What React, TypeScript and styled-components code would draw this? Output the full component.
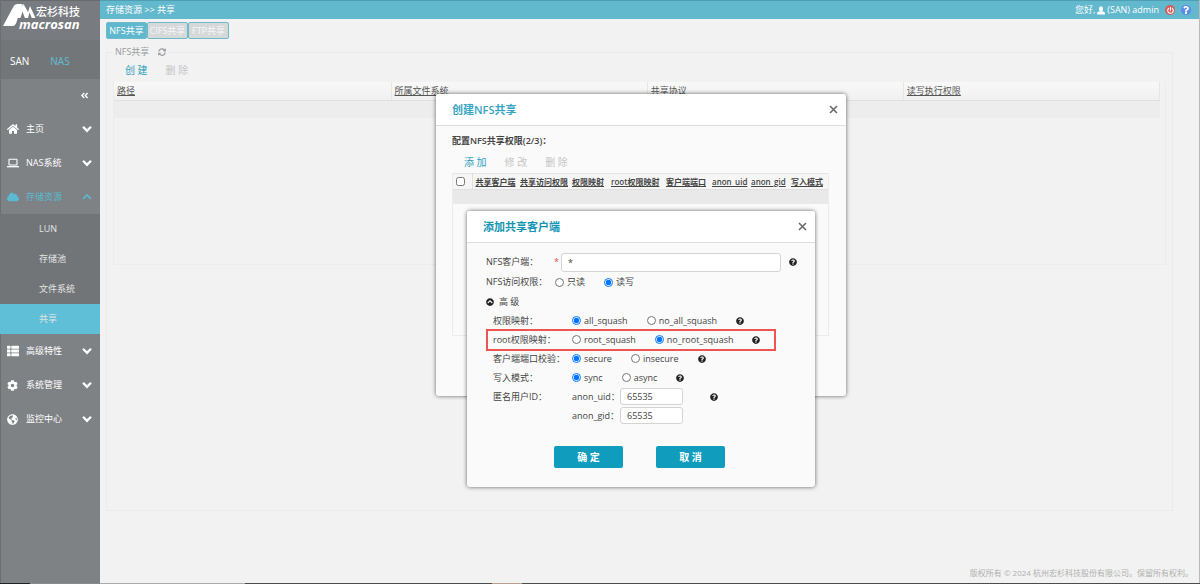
import React from 'react';
import styled, { createGlobalStyle, css } from 'styled-components';
import {
  FaAngleDoubleLeft, FaChevronCircleUp, FaCloud, FaCog,
  FaGlobeAmericas, FaHome, FaPowerOff, FaQuestion, FaQuestionCircle, FaSyncAlt, FaThList,
} from 'react-icons/fa';

const GlobalStyle = createGlobalStyle`
  * { box-sizing: border-box; }
  body {
    margin: 0;
    background: #f2f2f2;
    font: 9px/12px "Open Sans", "Noto Sans CJK SC", sans-serif;
    color: #444;
  }
  button, input { font: inherit; }
  button { cursor: pointer; }
  a { color: inherit; text-decoration: none; }
  ul { list-style: none; margin: 0; padding: 0; }
  svg { display: block; flex: none; }
`;

const Shell = styled.div`
  position: relative;
  display: flex;
  min-height: 100vh;
`;

/* sidebar */
const Sidebar = styled.aside`
  flex: none;
  width: 100px;
  background: #7e8285;
  border-left: 1px solid #6c6f72;
  color: #f4f4f4;
`;
const Logo = styled.div`
  display: flex;
  height: 40px;
  padding: 3px 0 0 2px;
  background: #787b7f;
  border-top: 1px solid #686b6e;
  color: #fff;
`;
const LogoText = styled.div`
  display: flex;
  flex-direction: column;
  margin-left: -17px;
  padding-top: 2px;
`;
const LogoName = styled.span`
  padding-left: 17px;
  font-size: 11px;
  line-height: 12px;
  font-weight: 500;
`;
const LogoLatin = styled.span`
  font: italic 700 13px/12px "Open Sans", sans-serif;
`;
const Systems = styled.nav`
  display: flex;
  align-items: center;
  gap: 21px;
  height: 39px;
  padding: 2px 0 0 9px;
  background: #737679;
  font-size: 10px;
`;
const SystemLink = styled.a<{ $active?: boolean }>`
  color: ${p => (p.$active ? '#62bdd6' : '#fff')};
`;
const Collapse = styled.button`
  display: flex;
  align-items: center;
  justify-content: flex-end;
  width: 100%;
  height: 33px;
  padding: 0 11px 0 0;
  border: 0;
  background: none;
  color: #fff;
`;
const MenuItem = styled.a<{ $active?: boolean }>`
  display: flex;
  align-items: center;
  height: 34px;
  padding: 0 8px 0 6px;
  color: ${p => (p.$active ? '#5bb9d1' : '#fff')};
`;
const MenuIcon = styled.span`
  width: 19px;
`;
const MenuText = styled.span`
  flex: 1;
`;
const SubItem = styled.a<{ $active?: boolean }>`
  display: flex;
  align-items: center;
  height: 30px;
  margin-left: -1px;
  padding-left: 39px;
  color: #e2e4e5;
  background: ${p => (p.$active ? '#5fbfd6' : '#727578')};
`;

/* main area */
const Main = styled.main`
  flex: 1;
  min-width: 0;
  display: flex;
  flex-direction: column;
  border-right: 1px solid #b9b9b9;
`;
const TopBar = styled.header`
  display: flex;
  align-items: center;
  justify-content: space-between;
  height: 19px;
  padding: 0 8px 0 6px;
  background: #62b8cd;
  border-top: 1px solid #4e9fb3;
  color: #fff;
`;
const UserBox = styled.div`
  display: flex;
  align-items: center;
  gap: 2px;
`;
const RoundButton = styled.button<{ $color: string }>`
  display: flex;
  align-items: center;
  justify-content: center;
  width: 10px;
  height: 10px;
  margin-left: 4px;
  padding: 0;
  border: 0;
  border-radius: 5px;
  background: ${p => p.$color};
  color: #fff;
`;
const Tabs = styled.div`
  display: flex;
  padding: 3px 6px 0;
`;
const Tab = styled.button<{ $active?: boolean }>`
  min-width: 41px;
  height: 17px;
  padding: 0 1px;
  border: 1px solid #6fb9ca;
  border-radius: 2px;
  background: ${p => (p.$active ? '#5fb8cd' : '#d6d9da')};
  color: ${p => (p.$active ? '#fff' : '#f6f6f6')};
`;
const Panel = styled.fieldset`
  flex: 1;
  min-width: 0;
  margin: 7px 26px 0 6px;
  padding: 6px 6px 0;
  border: 1px solid #ebebeb;
`;
const PanelTitle = styled.legend`
  display: flex;
  align-items: center;
  gap: 9px;
  padding: 0 2px;
  color: #9a9a9f;
`;
const Actions = styled.div`
  display: flex;
  gap: 18px;
  padding-left: 12px;
`;
const Action = styled.button`
  padding: 0;
  border: 0;
  background: none;
  color: #2d9fbe;
  font-size: 10px;
  line-height: 12px;
  &:disabled { color: #c6c6c6; }
`;
const GridBox = styled.div<{ $height: number; $top: number }>`
  height: ${p => p.$height}px;
  margin-top: ${p => p.$top}px;
  border: 1px solid #ececec;
  border-top: 0;
`;
const ShareTable = styled.table`
  width: calc(100% - 5px);
  table-layout: fixed;
  border-collapse: collapse;
  th {
    height: 18px;
    padding: 0 3px;
    border-right: 1px solid #e6e6e6;
    border-bottom: 1px solid #e0e0e0;
    background: linear-gradient(#f8f8f8, #f0f0f0);
    color: #555;
    font-weight: 400;
    text-align: left;
    text-decoration: underline;
  }
  td { height: 18px; padding: 0; background: #ededed; }
`;
const Footer = styled.footer`
  height: 73px;
  padding: 56px 6px 0 0;
  color: #b0b0b0;
  font-size: 8px;
  text-align: right;
`;

/* dialogs */
const Overlay = styled.div<{ $top: number }>`
  position: absolute;
  inset: 0;
  display: flex;
  justify-content: center;
  align-items: flex-start;
  padding: ${p => p.$top}px 0 0 82px;
`;
const Dialog = styled.section<{ $width: number; $height: number }>`
  width: ${p => p.$width}px;
  min-height: ${p => p.$height}px;
  border-radius: 3px;
  background: #fafafa;
  box-shadow: 0 0 4px rgba(0, 0, 0, .6);
`;
const DialogHead = styled.header`
  display: flex;
  align-items: center;
  justify-content: space-between;
  height: 32px;
  padding: 0 8px 0 16px;
  border-bottom: 1px solid #ddd;
  border-radius: 3px 3px 0 0;
  background: #fff;
`;
const DialogTitle = styled.h2<{ $soft?: boolean }>`
  margin: 0;
  color: ${p => (p.$soft ? '#36a5c2' : '#1394b2')};
  font-size: 11px;
  font-weight: ${p => (p.$soft ? 600 : 700)};
`;
const Close = styled.button`
  padding: 0;
  border: 0;
  background: none;
  color: #6a6a6a;
`;
const DialogBody = styled.div`
  padding: 9px 17px 0 16px;
`;
const Step = styled.p`
  margin: 0 0 9px;
  font-weight: 600;
`;
const ClientTable = styled.table`
  width: 100%;
  table-layout: fixed;
  border-collapse: collapse;
  font-size: 8px;
  th {
    height: 16px;
    padding: 0 0 0 3px;
    border-top: 1px solid #e4e4e4;
    border-bottom: 1px solid #e0e0e0;
    background: #f6f6f6;
    font-weight: 600;
    line-height: 10px;
    text-align: left;
    text-decoration: underline;
    white-space: nowrap;
  }
  th:first-child { border-right: 1px solid #e0e0e0; }
  td { height: 14px; padding: 0; background: #e9e9e9; }
`;
const Check = styled.input`
  display: block;
  width: 9px;
  height: 9px;
  margin: 0;
`;

/* form */
const Form = styled.form`
  padding: 9px 14px 0 19px;
`;
const Row = styled.div<{ $nested?: boolean; $marked?: boolean }>`
  position: relative;
  display: flex;
  align-items: center;
  height: ${p => (p.$nested ? 19 : 20)}px;
  padding-left: ${p => (p.$nested ? 7 : 0)}px;
  ${p => p.$marked && css`
    &::after {
      content: "";
      position: absolute;
      inset: -1px 25px -2px 0;
      border: 2px solid #ee5451;
      pointer-events: none;
    }
  `}
`;
const Label = styled.span<{ $width: number }>`
  flex: none;
  display: flex;
  justify-content: space-between;
  width: ${p => p.$width}px;
  padding-right: 2px;
  white-space: nowrap;
`;
const Star = styled.span`
  color: #e2503f;
`;
const Options = styled.div`
  display: flex;
  align-items: center;
  gap: 19px;
`;
const Option = styled.label`
  display: flex;
  align-items: center;
  gap: 3px;
`;
const Radio = styled.input`
  width: 9px;
  height: 9px;
  margin: 0;
`;
const TextBox = styled.input<{ $small?: boolean }>`
  width: ${p => (p.$small ? 63 : 220)}px;
  height: ${p => (p.$small ? 17 : 19)}px;
  padding: 0 6px;
  border: 1px solid #d4d4d4;
  border-radius: 3px;
  background: #fff;
  color: #444;
`;
const IdLabel = styled.label`
  width: 48px;
`;
const Help = styled.span<{ $gap?: number }>`
  margin-left: ${p => p.$gap ?? 0}px;
  color: #222;
`;
const Advanced = styled.button`
  display: flex;
  align-items: center;
  gap: 5px;
  height: 19px;
  padding: 0;
  border: 0;
  background: none;
  color: #444;
  svg { color: #222; }
`;
const Buttons = styled.div`
  display: flex;
  justify-content: center;
  gap: 33px;
  padding: 21px 8px 0 0;
`;
const Primary = styled.button`
  width: 69px;
  height: 22px;
  border: 0;
  border-radius: 2px;
  background: #0f9cbd;
  color: #fff;
  font-size: 10px;
  font-weight: 600;
`;
const Strip = styled.div`
  position: absolute;
  inset: auto 0 0;
  height: 1px;
  background: linear-gradient(90deg, #222 30px, #8a8a8a 30px 100px, #aaa 100px 245px, #4c4c4c 245px 492px, #b89f90 492px 522px, #4c4c4c 522px);
`;

const CloseIcon = () => (
  <svg width="9" height="9" viewBox="0 0 9 9" stroke="currentColor" strokeWidth="1.6">
    <path d="M1 1l7 7M8 1l-7 7" />
  </svg>
);

const Chevron = ({ up }: { up?: boolean }) => (
  <svg width="10" height="8" viewBox="0 0 10 8" fill="none" stroke="currentColor" strokeWidth={up ? 1.7 : 2.3}>
    <path d={up ? 'M1 6l4-4 4 4' : 'M1 1.8l4 4 4-4'} />
  </svg>
);

const LaptopIcon = () => (
  <svg width="12" height="10" viewBox="0 0 12 10" fill="none" stroke="currentColor">
    <rect x="2" y="1.2" width="8" height="5.8" rx=".6" strokeWidth="1.1" />
    <path d="M0 8.7h12" strokeWidth="1.3" />
  </svg>
);

const UserIcon = () => (
  <svg width="8" height="9" viewBox="0 0 8 9" fill="currentColor">
    <ellipse cx="4" cy="2.7" rx="2.1" ry="2.5" />
    <path d="M0 8.5V7.4q0-1.7 2.4-2.2h3.2Q8 5.700 8 7.400v1.100z" />
  </svg>
);

const LogoMark = () => (
  <svg width="33" height="23" viewBox="0 0 33 23" fill="currentColor">
    <path d="M0 22L10.500 2.500Q11.800 0 14 0h5.500L13 19.500Q12 22 9.500 22z" />
    <path d="M18 3l2.500-3 4.500 8L27 2l5.500 12h-3.700L26.500 8.500 25 14h-3.200L19.500 7.500 17.500 14h-3z" />
  </svg>
);

const HelpIcon = ({ gap }: { gap?: number }) => (
  <Help $gap={gap}><FaQuestionCircle size={8} /></Help>
);

const Choice = ({ name, options, value }: { name: string; options: string[]; value: string }) => (
  <>
    {options.map(o => (
      <Option key={o}>
        <Radio type="radio" name={name} defaultChecked={o === value} />
        {o}
      </Option>
    ))}
  </>
);

const settings = [
  { label: '权限映射：', name: 'squash', options: ['all_squash', 'no_all_squash'], value: 'all_squash' },
  { label: 'root权限映射：', name: 'root', options: ['root_squash', 'no_root_squash'], value: 'no_root_squash', marked: true },
  { label: '客户端端口校验：', name: 'port', options: ['secure', 'insecure'], value: 'secure' },
  { label: '写入模式：', name: 'mode', options: ['sync', 'async'], value: 'sync' },
];

const clientColumns: [string, number][] = [
  ['共享客户端', 45], ['共享访问权限', 52], ['权限映射', 39], ['root权限映射', 55],
  ['客户端端口', 46], ['anon_uid', 39], ['anon_gid', 40], ['写入模式', 40],
];

export default function App() {
  return (
    <Shell>
      <GlobalStyle />
      <Sidebar>
        <Logo>
          <LogoMark />
          <LogoText>
            <LogoName>宏杉科技</LogoName>
            <LogoLatin>macrosan</LogoLatin>
          </LogoText>
        </Logo>
        <Systems>
          <SystemLink href="#san">SAN</SystemLink>
          <SystemLink href="#nas" $active>NAS</SystemLink>
        </Systems>
        <Collapse aria-label="收起"><FaAngleDoubleLeft size={9} /></Collapse>
        <nav>
          <MenuItem href="#home"><MenuIcon><FaHome size={12} /></MenuIcon><MenuText>主页</MenuText><Chevron /></MenuItem>
          <MenuItem href="#system"><MenuIcon><LaptopIcon /></MenuIcon><MenuText>NAS系统</MenuText><Chevron /></MenuItem>
          <MenuItem href="#storage" $active><MenuIcon><FaCloud size={12} /></MenuIcon><MenuText>存储资源</MenuText><Chevron up /></MenuItem>
          <ul>
            <li><SubItem href="#lun">LUN</SubItem></li>
            <li><SubItem href="#pool">存储池</SubItem></li>
            <li><SubItem href="#fs">文件系统</SubItem></li>
            <li><SubItem href="#share" $active>共享</SubItem></li>
          </ul>
          <MenuItem href="#advanced"><MenuIcon><FaThList size={12} /></MenuIcon><MenuText>高级特性</MenuText><Chevron /></MenuItem>
          <MenuItem href="#manage"><MenuIcon><FaCog size={11} /></MenuIcon><MenuText>系统管理</MenuText><Chevron /></MenuItem>
          <MenuItem href="#monitor"><MenuIcon><FaGlobeAmericas size={11} /></MenuIcon><MenuText>监控中心</MenuText><Chevron /></MenuItem>
        </nav>
      </Sidebar>

      <Main>
        <TopBar>
          <span>存储资源 &gt;&gt; 共享</span>
          <UserBox>
            <span>您好,</span>
            <UserIcon />
            <span>(SAN) admin</span>
            <RoundButton $color="#dc5a5a" aria-label="退出"><FaPowerOff size={7} /></RoundButton>
            <RoundButton $color="#5a8be6" aria-label="帮助"><FaQuestion size={8} /></RoundButton>
          </UserBox>
        </TopBar>
        <Tabs>
          <Tab $active>NFS共享</Tab>
          <Tab>CIFS共享</Tab>
          <Tab>FTP共享</Tab>
        </Tabs>
        <Panel>
          <PanelTitle>NFS共享 <FaSyncAlt size={8} /></PanelTitle>
          <Actions>
            <Action>创 建</Action>
            <Action disabled>删 除</Action>
          </Actions>
          <GridBox $top={6} $height={183}>
            <ShareTable>
              <colgroup>
                <col width="26.5%" />
                <col width="24.5%" />
                <col width="24.5%" />
                <col width="24.5%" />
              </colgroup>
              <thead><tr><th>路径</th><th>所属文件系统</th><th>共享协议</th><th>读写执行权限</th></tr></thead>
              <tbody><tr><td colSpan={4} /></tr></tbody>
            </ShareTable>
          </GridBox>
        </Panel>
        <Footer>版权所有 © 2024 杭州宏杉科技股份有限公司。保留所有权利。</Footer>
      </Main>

      <Overlay $top={94}>
        <Dialog $width={410} $height={302} role="dialog" aria-label="创建NFS共享">
          <DialogHead>
            <DialogTitle $soft>创建NFS共享</DialogTitle>
            <Close aria-label="关闭"><CloseIcon /></Close>
          </DialogHead>
          <DialogBody>
            <Step>配置NFS共享权限(2/3)：</Step>
            <Actions>
              <Action>添 加</Action>
              <Action disabled>修 改</Action>
              <Action disabled>删 除</Action>
            </Actions>
            <GridBox $top={5} $height={163}>
              <ClientTable>
                <colgroup>
                  <col width={19} />
                  {clientColumns.map(([name, width]) => <col key={name} width={width} />)}
                </colgroup>
                <thead>
                  <tr>
                    <th><Check type="checkbox" aria-label="全选" /></th>
                    {clientColumns.map(([name]) => <th key={name}>{name}</th>)}
                  </tr>
                </thead>
                <tbody><tr><td colSpan={9} /></tr></tbody>
              </ClientTable>
            </GridBox>
          </DialogBody>
        </Dialog>
      </Overlay>

      <Overlay $top={211}>
        <Dialog $width={348} $height={276} role="dialog" aria-label="添加共享客户端">
          <DialogHead>
            <DialogTitle>添加共享客户端</DialogTitle>
            <Close aria-label="关闭"><CloseIcon /></Close>
          </DialogHead>
          <Form onSubmit={e => e.preventDefault()}>
            <Row>
              <Label as="label" htmlFor="client" $width={75}>NFS客户端： <Star>*</Star></Label>
              <TextBox id="client" defaultValue="*" />
              <HelpIcon gap={8} />
            </Row>
            <Row>
              <Label $width={69}>NFS访问权限：</Label>
              <Options><Choice name="access" options={['只读', '读写']} value="读写" /></Options>
            </Row>
            <Advanced type="button"><FaChevronCircleUp size={8} />高 级</Advanced>
            {settings.map(s => (
              <Row key={s.name} $nested $marked={s.marked}>
                <Label $width={79}>{s.label}</Label>
                <Options>
                  <Choice name={s.name} options={s.options} value={s.value} />
                  <HelpIcon />
                </Options>
              </Row>
            ))}
            <Row $nested>
              <Label $width={79}>匿名用户ID：</Label>
              <IdLabel htmlFor="uid">anon_uid：</IdLabel>
              <TextBox id="uid" $small defaultValue="65535" />
              <HelpIcon gap={27} />
            </Row>
            <Row $nested>
              <Label $width={79} />
              <IdLabel htmlFor="gid">anon_gid：</IdLabel>
              <TextBox id="gid" $small defaultValue="65535" />
            </Row>
            <Buttons>
              <Primary type="submit">确 定</Primary>
              <Primary type="button">取 消</Primary>
            </Buttons>
          </Form>
        </Dialog>
      </Overlay>
      <Strip />
    </Shell>
  );
}
